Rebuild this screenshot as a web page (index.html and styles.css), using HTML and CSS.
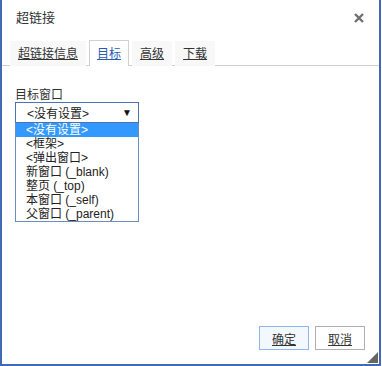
FILE: index.html
```html
<!DOCTYPE html>
<html lang="zh">

<head>
    <meta charset="UTF-8">
    <meta name="viewport" content="width=device-width, initial-scale=1.0">
    <title>超链接</title>
    <link rel="stylesheet" href="styles.css">
</head>

<body>
    <div class="dialog">
        <div class="dialog-title">
            <span>超链接</span>
            <a href="#" class="close" title="关闭">
                <svg width="10" height="10" viewBox="0 0 10 10">
                    <path d="M1 1 L9 9 M9 1 L1 9" stroke="#707070" stroke-width="2.4" />
                </svg>
            </a>
        </div>
        <div class="tabs">
            <a href="#" class="tab">超链接信息</a>
            <a href="#" class="tab active">目标</a>
            <a href="#" class="tab">高级</a>
            <a href="#" class="tab">下载</a>
        </div>
        <div class="dialog-body">
            <label class="field-label">目标窗口</label>
            <div class="select-wrap">
                <div class="select">
                    <span>&lt;没有设置&gt;</span>
                    <span class="arrow">&#9660;</span>
                </div>
                <ul class="options">
                    <li class="selected">&lt;没有设置&gt;</li>
                    <li>&lt;框架&gt;</li>
                    <li>&lt;弹出窗口&gt;</li>
                    <li>新窗口 (_blank)</li>
                    <li>整页 (_top)</li>
                    <li>本窗口 (_self)</li>
                    <li>父窗口 (_parent)</li>
                </ul>
            </div>
        </div>
        <div class="dialog-footer">
            <button class="btn btn-ok">确定</button>
            <button class="btn">取消</button>
        </div>
        <div class="resizer"></div>
    </div>
</body>

</html>
```

FILE: styles.css
```css
body {
    margin: 0;
    background-color: #fff;
    font-family: "Liberation Sans", "Noto Sans CJK SC", sans-serif;
    font-size: 12px;
    color: #333;
}

.dialog {
    position: relative;
    box-sizing: border-box;
    width: 381px;
    height: 366px;
    border: 2px solid #3f6bb4;
    border-top: none;
    display: flex;
    flex-direction: column;
    background-color: #fff;
}

.dialog-title {
    height: 40px;
    box-sizing: border-box;
    padding: 10px 14px 0 14px;
    font-size: 13px;
    line-height: 15px;
    display: flex;
    justify-content: space-between;
}

.close {
    margin-top: 3px;
    margin-right: 1px;
    line-height: 0;
}

.tabs {
    height: 25px;
    padding-left: 8px;
    border-bottom: 1px solid #d1d1d1;
    display: flex;
    align-items: flex-end;
    gap: 3px;
}

.tab {
    height: 24px;
    line-height: 24px;
    padding: 0 7px;
    border: 1px solid transparent;
    border-bottom: none;
    background-color: #f8f8f8;
    color: #333;
    text-decoration: underline;
    margin-bottom: -1px;
    box-sizing: content-box;
}

.tab.active {
    height: 25px;
    line-height: 26px;
    background-color: #fff;
    border-color: #d1d1d1;
    color: #2a5bb0;
}

.dialog-body {
    flex: 1;
    padding: 22px 13px 0 13px;
}

.field-label {
    display: block;
    line-height: 14px;
}

.select-wrap {
    position: relative;
    width: 124px;
}

.select {
    box-sizing: border-box;
    height: 21px;
    border: 1px solid #4a72b5;
    padding: 0 6px 0 11px;
    display: flex;
    justify-content: space-between;
    align-items: center;
    color: #222;
}

.arrow {
    font-size: 10px;
    color: #111;
}

.options {
    position: absolute;
    top: 21px;
    left: 0;
    box-sizing: border-box;
    width: 124px;
    margin: 0;
    padding: 0;
    list-style: none;
    border: 1px solid #6d8cc0;
    border-top: none;
    background-color: #fff;
}

.options li {
    height: 14px;
    line-height: 14px;
    padding-left: 10px;
    color: #222;
}

.options li.selected {
    background-color: #3399ff;
    color: #fff;
}

.dialog-footer {
    display: flex;
    justify-content: flex-end;
    gap: 6px;
    padding: 0 14px 14px 0;
}

.btn {
    width: 50px;
    height: 24px;
    font-family: inherit;
    font-size: 12px;
    color: #333;
    text-decoration: underline;
    background-color: #fff;
    border: 1px solid #b0b0b0;
    padding: 0;
}

.btn-ok {
    background-color: #f3f8ff;
    border-color: #8db7ee;
}

.resizer {
    position: absolute;
    right: 1px;
    bottom: 1px;
    width: 0;
    height: 0;
    border-left: 11px solid transparent;
    border-bottom: 11px solid #666;
}
```
